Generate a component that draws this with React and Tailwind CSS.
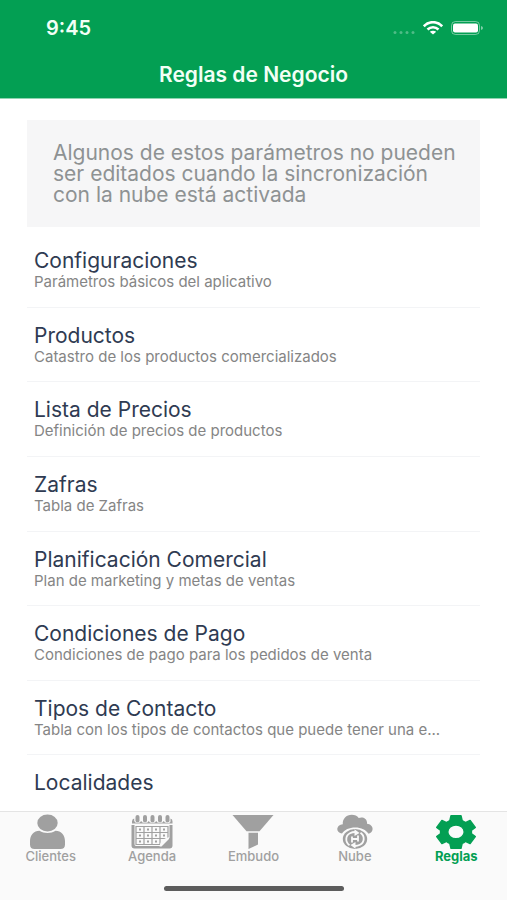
import clsx from "clsx";

const RULES = [
  { title: "Configuraciones", detail: "Parámetros básicos del aplicativo" },
  { title: "Productos", detail: "Catastro de los productos comercializados" },
  { title: "Lista de Precios", detail: "Definición de precios de productos" },
  { title: "Zafras", detail: "Tabla de Zafras" },
  { title: "Planificación Comercial", detail: "Plan de marketing y metas de ventas" },
  { title: "Condiciones de Pago", detail: "Condiciones de pago para los pedidos de venta" },
  { title: "Tipos de Contacto", detail: "Tabla con los tipos de contactos que puede tener una e..." },
  { title: "Localidades", detail: "" },
];

function ClientsIcon() {
  return (
    <svg viewBox="0 0 42 36" className="w-[42px] h-9" fill="currentColor" aria-hidden="true">
      <ellipse cx="17.5" cy="9" rx="10.2" ry="8.5" />
      <path d="M9.5 16.8c2.4 1.4 5 2.2 8 2.2s5.600-.8 8-2.200c5.800 0 9.500 4.600 9.500 10.200v3.500c0 3-1.600 4.500-4.500 4.500h-26C1.600 35 0 33.500 0 30.500V27c0-5.600 3.700-10.200 9.500-10.200z" />
    </svg>
  );
}

function AgendaIcon() {
  const rings = [6.5, 14, 21.5, 29, 36.5];
  const dots = [9, 17, 25, 33];

  return (
    <svg viewBox="0 0 42 36" className="w-[42px] h-9" fill="currentColor" aria-hidden="true">
      {rings.map((x) => (
        <rect key={x} x={x - 2} y="1" width="4" height="7.5" rx="2" />
      ))}
      <path d="M1 9.500V7.500Q1 5 3.200 4.500V7q.6 2 3.300 2T10.200 7q.6 2 3.800 2T17.700 7q.6 2 3.800 2T25.200 7q.6 2 3.800 2T32.700 7q.6 2 3.800 2T39.500 7V4.500Q41.500 5 41.500 7.500v2z" />
      {/* page frame with the folded corner */}
      <path
        fillRule="evenodd"
        d="M.5 11h41v20.500q0 3-3 3h-35q-3 0-3-3zM3.500 11v19q0 2 1.500 2H29q2-6.500 9.500-8.500V11z"
      />
      <path
        d="M5 12.500h32M5 18.500h32M5 24.500h32M5 30.500h24M5 12v19M13 12v19M21 12v19M29 12v19M37 12v12"
        fill="none"
        stroke="currentColor"
        strokeWidth="1.200"
      />
      {dots.map((x) => (
        <g key={x}>
          <rect x={x - 1} y="14.500" width="2" height="2" />
          <rect x={x - 1} y="20.500" width="2" height="2" />
          <rect x={x - 1} y="26.500" width="2" height="2" />
        </g>
      ))}
      <path d="M28.500 32.500q1-8 10-9.500l-.5 2-7.500 7.500z" fill="#fafafa" />
    </svg>
  );
}

function FunnelIcon() {
  return (
    <svg viewBox="0 0 42 36" className="w-[42px] h-9" fill="currentColor" aria-hidden="true">
      <path d="M.5 1h41L27.500 17.200h-13z" />
      <path d="M16.500 18.700h9.500v11.800L16.500 35z" />
    </svg>
  );
}

function CloudIcon() {
  return (
    <svg viewBox="0 0 42 36" className="w-[42px] h-9" fill="currentColor" aria-hidden="true">
      <path d="M8 19.500C5.200 19.200 3.300 17.500 3.300 15.300c0-2.600 2.400-4.800 5.500-5C8.300 5 12.300.8 17.800.8c3 0 5.400 1.200 6.900 3.200 4-1.600 8.300.6 8.300 4.500v1.200c3.300.3 5.600 2.500 5.600 5.300 0 2.300-1.600 4.100-4 4.800-2.600-4-7.400-6.400-13.400-6.400S10.500 15.500 8 19.500z" />
      <ellipse cx="21" cy="25" rx="12.200" ry="10" />
      <g fill="none" stroke="#fafafa" strokeWidth="1.800">
        <path d="M15.500 31.200C11 28 11.300 21.500 16 19.200c1.600-.8 3.200-1.200 5-1.200" />
        <path d="M26.500 18.800c4.500 3.200 4.200 9.700-.5 12-1.600.8-3.200 1.200-5 1.200" />
        <path d="M18 28.500v-6M24 21.500v6M18 25h6" />
      </g>
      <path d="M20.500 15.300l5 3.700-5 3zM21.500 34.700l-5-3.700 5-3z" fill="#fafafa" />
    </svg>
  );
}

function GearIcon() {
  return (
    <svg viewBox="0 0 42 36" className="w-[42px] h-9" fill="currentColor" aria-hidden="true">
      <path
        fillRule="evenodd"
        stroke="currentColor"
        strokeWidth="1.400"
        strokeLinejoin="round"
        d="M16 1.700h10l1.200 5q1.800.7 3.200 1.900l4.700-2.200 5.200 7-4 3q.4 1.600 0 3.200l4 3-5.200 7-4.700-2.200q-1.400 1.200-3.200 1.900l-1.200 5H16l-1.200-5q-1.800-.7-3.200-1.900l-4.700 2.200-5.200-7 4-3q-.4-1.600 0-3.200l-4-3 5.200-7 4.700 2.200q1.400-1.200 3.200-1.900zM21 11a8.200 6.900 0 1 0 0 13.800A8.200 6.900 0 1 0 21 11z"
      />
    </svg>
  );
}

const TABS = [
  { label: "Clientes", Icon: ClientsIcon },
  { label: "Agenda", Icon: AgendaIcon },
  { label: "Embudo", Icon: FunnelIcon },
  { label: "Nube", Icon: CloudIcon },
  { label: "Reglas", Icon: GearIcon, active: true },
];

function StatusBar() {
  return (
    <div className="flex items-center justify-between h-[55px] pl-[46px] pr-6">
      <span className="text-xl leading-6 font-semibold">9:45</span>
      <div className="flex items-center gap-2">
        <svg viewBox="0 0 22 14" className="w-[22px] h-3.5" fill="#fff" fillOpacity="0.3" aria-hidden="true">
          <circle cx="2" cy="11.500" r="1.500" />
          <circle cx="8" cy="11.500" r="1.500" />
          <circle cx="14" cy="11.500" r="1.500" />
          <circle cx="20" cy="11.500" r="1.500" />
        </svg>
        <svg viewBox="0 0 20 14" className="w-5 h-3.5" fill="none" stroke="#fff" strokeWidth="2.600" aria-hidden="true">
          <path d="M.8 5.300C6-.2 14-.2 19.200 5.300" />
          <path d="M4.500 8.500c3.200-3 7.800-3 11 0" />
          <path d="M10 13.500L6.800 10.800c1.900-1.500 4.500-1.500 6.400 0z" fill="#fff" stroke="none" />
        </svg>
        <svg viewBox="0 0 32 14" className="w-8 h-3.5" aria-hidden="true">
          <rect x=".5" y=".5" width="28" height="13" rx="4" fill="none" stroke="#fff" strokeOpacity="0.45" />
          <rect x="2" y="2.500" width="25" height="9" rx="2" fill="#fff" />
          <path d="M30 5v4q2-.7 2-2t-2-2z" fill="#fff" fillOpacity="0.5" />
        </svg>
      </div>
    </div>
  );
}

function RuleItem({ title, detail }) {
  return (
    <li className="pl-[7px] pt-4 border-b border-gray-100">
      <a href="#" className="block">
        <h2 className="text-[21px] leading-6 text-[#2f3b52]">{title}</h2>
        <p className="text-[15px] leading-[18px] text-[#858585] whitespace-nowrap">{detail}</p>
      </a>
    </li>
  );
}

export default function App() {
  return (
    <div className="flex flex-col h-screen bg-white font-['Inter',sans-serif]">
      <header className="shrink-0 bg-[#039f53] text-[#f2fff6] border-b border-[#8fd4b0]">
        <StatusBar />
        <h1 className="h-[43px] pt-1.5 text-center text-[21px] leading-7 font-semibold">
          Reglas de Negocio
        </h1>
      </header>

      <main className="flex-1 min-h-0 overflow-hidden px-[27px] pt-[21px]">
        <p className="pl-[26px] pr-5 py-[22px] bg-[#f6f6f7] text-[21px] leading-[21px] text-[#8e9293]">
          Algunos de estos parámetros no pueden ser editados cuando la sincronización con la nube está activada
        </p>
        <ul className="grid auto-rows-fr h-[597px] mt-1.5">
          {RULES.map((rule) => (
            <RuleItem key={rule.title} title={rule.title} detail={rule.detail} />
          ))}
        </ul>
      </main>

      <footer className="shrink-0 h-[89px] bg-[#fafafa] border-t border-[#e4e4e4]">
        <nav className="grid grid-cols-5">
          {TABS.map(({ label, Icon, active }) => (
            <button
              key={label}
              type="button"
              className={clsx(
                "flex flex-col items-center pt-0.5",
                active ? "text-[#039f53] font-bold" : "text-[#a0a0a0] font-medium"
              )}
            >
              <Icon />
              <span className="text-[13px] leading-3">{label}</span>
            </button>
          ))}
        </nav>
        <div className="w-[180px] h-[5px] mt-6 mx-auto rounded-full bg-[#5c5c5c]" />
      </footer>
    </div>
  );
}
